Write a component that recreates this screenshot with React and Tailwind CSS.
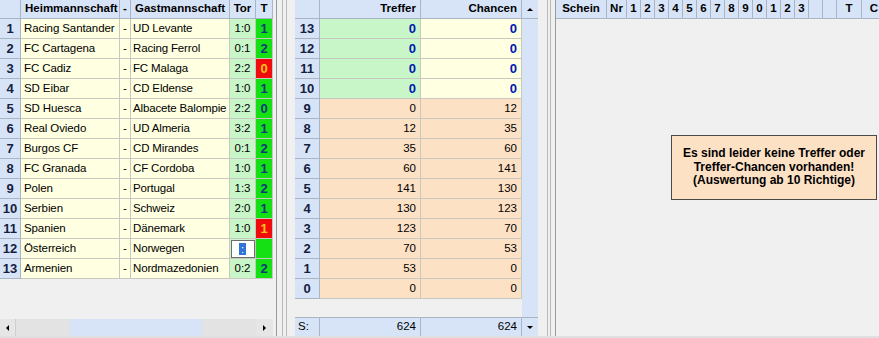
import React from "react";

const leftRows = [
  ["Racing Santander", "UD Levante", "1:0", "1", "g"],
  ["FC Cartagena", "Racing Ferrol", "0:1", "2", "g"],
  ["FC Cadiz", "FC Malaga", "2:2", "0", "r"],
  ["SD Eibar", "CD Eldense", "1:0", "1", "g"],
  ["SD Huesca", "Albacete Balompie", "2:2", "0", "g"],
  ["Real Oviedo", "UD Almeria", "3:2", "1", "g"],
  ["Burgos CF", "CD Mirandes", "0:1", "2", "g"],
  ["FC Granada", "CF Cordoba", "1:0", "1", "g"],
  ["Polen", "Portugal", "1:3", "2", "g"],
  ["Serbien", "Schweiz", "2:0", "1", "g"],
  ["Spanien", "Dänemark", "1:0", "1", "r"],
  ["Österreich", "Norwegen", "", "", "i"],
  ["Armenien", "Nordmazedonien", "0:2", "2", "g"],
];

const midRows = [
  [13, 0, 0],
  [12, 0, 0],
  [11, 0, 0],
  [10, 0, 0],
  [9, 0, 12],
  [8, 12, 35],
  [7, 35, 60],
  [6, 60, 141],
  [5, 141, 130],
  [4, 130, 123],
  [3, 123, 70],
  [2, 70, 53],
  [1, 53, 0],
  [0, 0, 0],
];

const font = { fontFamily: '"Liberation Sans", Arial, sans-serif' };

function Hdr({ w, children, align = "center", cls = "" }) {
  const a = align === "right" ? "justify-end pr-[4px]" : align === "left" ? "justify-start pl-[4px]" : "justify-center";
  return (
    <div className={`h-[19px] ${w} shrink-0 flex items-center ${a} bg-[#d7e4f7] border-r border-b border-[#a9b4c4] text-[11.5px] font-bold text-black whitespace-nowrap overflow-hidden ${cls}`}>
      {children}
    </div>
  );
}

function Up() {
  return <div className="w-0 h-0 border-l-[3px] border-r-[3px] border-b-[3px] border-l-transparent border-r-transparent border-b-black" />;
}
function Down() {
  return <div className="w-0 h-0 border-l-[3px] border-r-[3px] border-t-[3px] border-l-transparent border-r-transparent border-t-black" />;
}
function Left() {
  return <div className="w-0 h-0 border-t-[3px] border-b-[3px] border-r-[3px] border-t-transparent border-b-transparent border-r-black" />;
}
function Right() {
  return <div className="w-0 h-0 border-t-[3px] border-b-[3px] border-l-[3px] border-t-transparent border-b-transparent border-l-black" />;
}

function LeftPanel() {
  return (
    <div className="w-[276px] h-[336px] shrink-0 flex flex-col bg-[#f0f0f0]">
      <div className="flex">
        <Hdr w="w-[21px]" />
        <Hdr w="w-[99px]" align="left">Heimmannschaft</Hdr>
        <Hdr w="w-[11px]">-</Hdr>
        <Hdr w="w-[99px]" align="left" cls="pl-[3px]">Gastmannschaft</Hdr>
        <Hdr w="w-[26px]">Tor</Hdr>
        <Hdr w="w-[17px]">T</Hdr>
      </div>
      {leftRows.map((r, i) => (
        <div key={i} className="flex h-[20px]">
          <div className="w-[21px] shrink-0 flex items-center justify-center bg-[#d7e4f7] border-r border-b border-[#a9b4c4] text-[13px] font-bold text-[#152040]">
            {i + 1}
          </div>
          <div className="w-[99px] shrink-0 flex items-center pl-[3px] bg-[#ffffe1] border-r border-b border-[#c8c8c0] text-[11.5px] tracking-[-0.1px] text-black whitespace-nowrap overflow-hidden">
            {r[0]}
          </div>
          <div className="w-[11px] shrink-0 flex items-center justify-center bg-[#ffffe1] border-r border-b border-[#c8c8c0] text-[11.5px] text-black">
            -
          </div>
          <div className="w-[99px] shrink-0 flex items-center pl-[2px] bg-[#ffffe1] border-r border-b border-[#c8c8c0] text-[11.5px] tracking-[-0.15px] text-black whitespace-nowrap overflow-hidden">
            {r[1]}
          </div>
          {r[4] === "i" ? (
            <div className="w-[26px] shrink-0 flex items-center justify-center bg-[#c9f6c9] border-r border-b border-[#c8c8c0]">
              <div className="w-[24px] h-[18px] bg-white border border-[#6d6d6d] flex items-center justify-center">
                <div className="w-[7px] h-[12px] bg-[#2f74d6] text-white text-[11px] leading-[12px] text-center">:</div>
              </div>
            </div>
          ) : (
            <div className="w-[26px] shrink-0 flex items-center justify-center bg-[#c9f6c9] border-r border-b border-[#c8c8c0] text-[11.5px] text-black">
              {r[2]}
            </div>
          )}
          <div
            className={`w-[17px] shrink-0 flex items-center justify-center border-r border-b border-[#c8c8c0] text-[13px] font-bold ${
              r[4] === "r" ? "bg-[#f00c0c] text-[#ffc21a]" : "bg-[#14e014] text-[#0a3a7a]"
            }`}
          >
            {r[3]}
          </div>
        </div>
      ))}
      <div className="flex-1" />
      <div className="h-[17px] flex w-[273px]">
        <div className="w-[16px] h-[17px] bg-[#e6e6e6] flex items-center justify-center border-r border-[#d0d0d0]">
          <Left />
        </div>
        <div className="w-[54px] h-[17px] bg-[#e3e3e3]" />
        <div className="w-[132px] h-[17px] bg-[#d7e4f7]" />
        <div className="w-[54px] h-[17px] bg-[#e3e3e3]" />
        <div className="w-[17px] h-[17px] bg-[#e6e6e6] flex items-center justify-center">
          <Right />
        </div>
      </div>
    </div>
  );
}

function Splitter() {
  return (
    <div className="h-[336px] w-[19px] shrink-0 flex bg-[#f0f0f0]">
      <div className="w-[1px] h-full bg-[#9a9a9a]" />
      <div className="w-[5px] h-full bg-[#f0f0f0]" />
      <div className="w-[1px] h-full bg-[#b9b9b9]" />
      <div className="w-[3px] h-full bg-[#f0f0f0]" />
      <div className="w-[1px] h-full bg-[#b9b9b9]" />
      <div className="w-[8px] h-full bg-[#f0f0f0]" />
    </div>
  );
}

function MidPanel() {
  return (
    <div className="w-[243px] h-[336px] shrink-0 flex bg-[#f0f0f0]">
      <div className="w-[227px] flex flex-col">
        <div className="flex">
          <Hdr w="w-[25px]" />
          <Hdr w="w-[101px]" align="right">Treffer</Hdr>
          <Hdr w="w-[101px]" align="right">Chancen</Hdr>
        </div>
        {midRows.map((r, i) => {
          const hit = r[0] >= 10;
          return (
            <div key={i} className="flex h-[20px]">
              <div className="w-[25px] shrink-0 flex items-center justify-center bg-[#d7e4f7] border-r border-b border-[#a9b4c4] text-[13px] font-bold text-[#152040]">
                {r[0]}
              </div>
              <div
                className={`w-[101px] shrink-0 flex items-center justify-end pr-[4px] border-r border-b border-[#c8c8c0] ${
                  hit ? "bg-[#c9f6c9] font-bold text-[#0018b0] text-[13px]" : "bg-[#fde1c5] text-black text-[11.5px]"
                }`}
              >
                {r[1]}
              </div>
              <div
                className={`w-[101px] shrink-0 flex items-center justify-end pr-[4px] border-r border-b border-[#c8c8c0] ${
                  hit ? "bg-[#ffffe1] font-bold text-[#0018b0] text-[13px]" : "bg-[#fde1c5] text-black text-[11.5px]"
                }`}
              >
                {r[2]}
              </div>
            </div>
          );
        })}
        <div className="flex-1" />
        <div className="flex h-[19px]">
          <div className="w-[25px] shrink-0 flex items-center pl-[3px] bg-[#d7e4f7] border-r border-t border-[#a9b4c4] text-[11.5px] text-black">
            S:
          </div>
          <div className="w-[101px] shrink-0 flex items-center justify-end pr-[4px] bg-[#d7e4f7] border-r border-t border-[#a9b4c4] text-[11.5px] text-black">
            624
          </div>
          <div className="w-[101px] shrink-0 flex items-center justify-end pr-[4px] bg-[#d7e4f7] border-r border-t border-[#a9b4c4] text-[11.5px] text-black">
            624
          </div>
        </div>
      </div>
      <div className="w-[16px] flex flex-col bg-[#d7e4f7]">
        <div className="h-[19px] flex items-center justify-center border-b border-[#a9b4c4] bg-[#d7e4f7]">
          <Up />
        </div>
        <div className="flex-1" />
        <div className="h-[19px] flex items-center justify-center border-t border-[#a9b4c4] bg-[#d7e4f7]">
          <Down />
        </div>
      </div>
    </div>
  );
}

const rightCols = [
  ["w-[51px]", "Schein"],
  ["w-[20px]", "Nr"],
  ["w-[14px]", "1"],
  ["w-[14px]", "2"],
  ["w-[14px]", "3"],
  ["w-[14px]", "4"],
  ["w-[14px]", "5"],
  ["w-[14px]", "6"],
  ["w-[14px]", "7"],
  ["w-[14px]", "8"],
  ["w-[14px]", "9"],
  ["w-[14px]", "0"],
  ["w-[14px]", "1"],
  ["w-[14px]", "2"],
  ["w-[14px]", "3"],
  ["w-[14px]", ""],
  ["w-[14px]", ""],
  ["w-[25px]", "T"],
  ["w-[25px]", "C"],
];

function Splitter2() {
  return (
    <div className="h-[336px] w-[18px] shrink-0 flex bg-[#f0f0f0]">
      <div className="w-[9px] h-full bg-[#f0f0f0]" />
      <div className="w-[1px] h-full bg-[#b9b9b9]" />
      <div className="w-[2px] h-full bg-[#f0f0f0]" />
      <div className="w-[1px] h-full bg-[#b9b9b9]" />
      <div className="w-[4px] h-full bg-[#f0f0f0]" />
      <div className="w-[1px] h-full bg-[#9a9a9a]" />
    </div>
  );
}

function RightPanel() {
  return (
    <div className="flex-1 h-[336px] flex flex-col bg-[#f0f0f0] overflow-hidden">
      <div className="flex">
        {rightCols.map((c, i) => (
          <Hdr key={i} w={c[0]}>
            {c[1]}
          </Hdr>
        ))}
      </div>
      <div className="flex-1 flex items-start justify-end pt-[116px] pr-[2px]">
        <div className="w-[206px] h-[65px] bg-[#fde1c5] border border-[#4a4a4a] flex flex-col items-center justify-center text-[12px] leading-[13.5px] font-bold text-black text-center">
          <div>Es sind leider keine Treffer oder</div>
          <div>Treffer-Chancen vorhanden!</div>
          <div>(Auswertung ab 10 Richtige)</div>
        </div>
      </div>
    </div>
  );
}

export default function App() {
  return (
    <div className="w-[879px] h-[338px] overflow-hidden bg-[#f0f0f0]" style={font}>
      <div className="flex h-[336px]">
        <LeftPanel />
        <Splitter />
        <MidPanel />
        <Splitter2 />
        <RightPanel />
      </div>
      <div className="h-[2px] bg-[#e0e0e0]" />
    </div>
  );
}
